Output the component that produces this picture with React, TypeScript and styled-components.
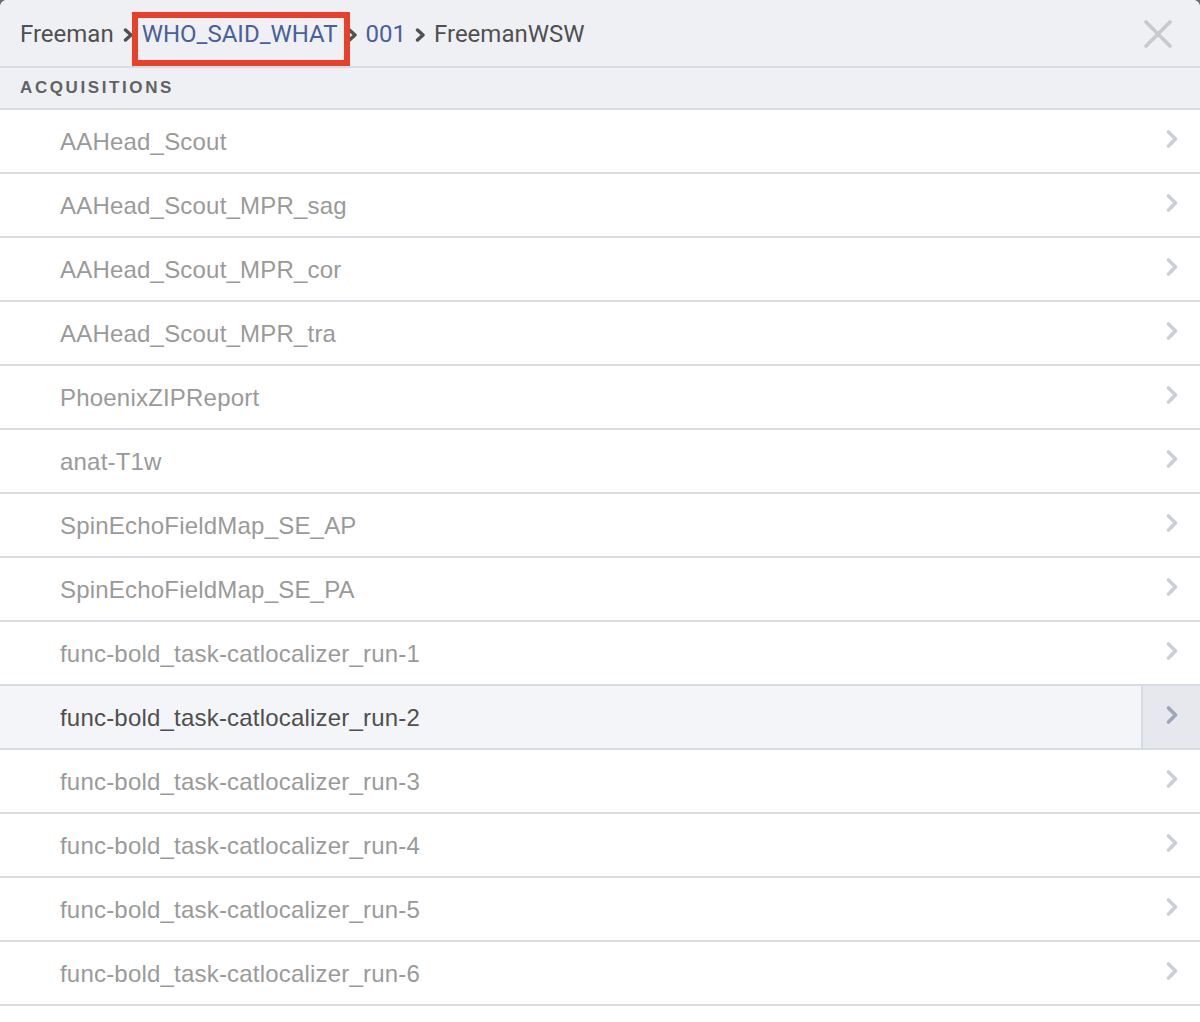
import React from "react";
import styled, { createGlobalStyle } from "styled-components";

const GlobalStyle = createGlobalStyle`
  html, body {
    margin: 0;
    padding: 0;
    background: #6b6b6b;
  }
  * { box-sizing: border-box; }
`;

const Modal = styled.div`
  width: 1200px;
  min-height: 1022px;
  background: #ffffff;
  border-radius: 7px 7px 0 0;
  overflow: hidden;
  display: flex;
  flex-direction: column;
`;

const Header = styled.div`
  height: 68px;
  display: flex;
  align-items: center;
  justify-content: space-between;
  padding: 2px 28px 0 20px;
  background: #eff0f4;
  border-bottom: 2px solid #d6dbe4;
`;

const Crumbs = styled.nav`
  display: flex;
  align-items: center;
  font-family: Roboto, "Liberation Sans", sans-serif;
  font-size: 24px;
  line-height: 28px;
  color: #505050;
`;

const Crumb = styled.span<{ $link?: boolean }>`
  color: ${(p) => (p.$link ? "#4b5f99" : "#505050")};
  white-space: nowrap;
`;

const Highlight = styled.span`
  position: relative;
  display: inline-block;
  &::after {
    content: "";
    position: absolute;
    left: -10px;
    right: -12px;
    top: -8px;
    bottom: -18px;
    border: 6px solid #e8402a;
    pointer-events: none;
  }
`;

const Sep = styled.svg`
  width: 11px;
  height: 14px;
  margin: 2px 8px 0 9px;
  flex: none;
`;

const CloseButton = styled.button`
  border: none;
  background: transparent;
  padding: 0;
  width: 28px;
  height: 28px;
  display: flex;
  cursor: pointer;
`;

const SectionTitle = styled.div`
  height: 42px;
  display: flex;
  align-items: center;
  padding: 0 20px 1px;
  background: #eff0f4;
  border-bottom: 2px solid #d6dbe4;
  font-family: "Liberation Sans", Arial, sans-serif;
  font-weight: 700;
  font-size: 17px;
  letter-spacing: 2.6px;
  color: #626262;
`;

const List = styled.div`
  display: flex;
  flex-direction: column;
`;

const Row = styled.div<{ $selected?: boolean }>`
  height: 64px;
  display: flex;
  align-items: stretch;
  border-bottom: 2px solid #d6dbe4;
  background: ${(p) => (p.$selected ? "#f4f5f9" : "#ffffff")};
`;

const Label = styled.div<{ $selected?: boolean }>`
  flex: 1;
  display: flex;
  align-items: center;
  padding: 1px 0 0 60px;
  font-family: "Liberation Sans", Arial, sans-serif;
  font-size: 24px;
  letter-spacing: 0.2px;
  color: ${(p) => (p.$selected ? "#4f4f4f" : "#9a9a9a")};
`;

const ChevronCell = styled.div<{ $selected?: boolean }>`
  width: 59px;
  display: flex;
  align-items: center;
  justify-content: center;
  padding-bottom: 4px;
  border-left: 2px solid ${(p) => (p.$selected ? "#d6dbe4" : "transparent")};
  background: ${(p) => (p.$selected ? "#e7e8ed" : "transparent")};
`;

const Chevron = styled.svg`
  width: 14px;
  height: 20px;
`;

const items = [
  "AAHead_Scout",
  "AAHead_Scout_MPR_sag",
  "AAHead_Scout_MPR_cor",
  "AAHead_Scout_MPR_tra",
  "PhoenixZIPReport",
  "anat-T1w",
  "SpinEchoFieldMap_SE_AP",
  "SpinEchoFieldMap_SE_PA",
  "func-bold_task-catlocalizer_run-1",
  "func-bold_task-catlocalizer_run-2",
  "func-bold_task-catlocalizer_run-3",
  "func-bold_task-catlocalizer_run-4",
  "func-bold_task-catlocalizer_run-5",
  "func-bold_task-catlocalizer_run-6",
];

const SELECTED = 9;

const Separator = () => (
  <Sep viewBox="0 0 11 14">
    <polyline
      points="2.5,2 8,7 2.5,12"
      fill="none"
      stroke="#505050"
      strokeWidth="3.4"
      strokeLinecap="round"
      strokeLinejoin="round"
    />
  </Sep>
);

export default function App() {
  return (
    <>
      <GlobalStyle />
      <Modal>
        <Header>
          <Crumbs>
            <Crumb>Freeman</Crumb>
            <Separator />
            <Highlight>
              <Crumb $link>WHO_SAID_WHAT</Crumb>
            </Highlight>
            <Separator />
            <Crumb $link>001</Crumb>
            <Separator />
            <Crumb>FreemanWSW</Crumb>
          </Crumbs>
          <CloseButton aria-label="Close">
            <svg width="28" height="28" viewBox="0 0 28 28">
              <path
                d="M2 2 L26 26 M26 2 L2 26"
                stroke="#c9c9c9"
                strokeWidth="3.6"
                strokeLinecap="round"
              />
            </svg>
          </CloseButton>
        </Header>
        <SectionTitle>ACQUISITIONS</SectionTitle>
        <List>
          {items.map((name, i) => {
            const sel = i === SELECTED;
            return (
              <Row key={name} $selected={sel}>
                <Label $selected={sel}>{name}</Label>
                <ChevronCell $selected={sel}>
                  <Chevron viewBox="0 0 14 20">
                    <polyline
                      points="3.5,3 10.5,10 3.5,17"
                      fill="none"
                      stroke={sel ? "#9ba5bc" : "#c9ceda"}
                      strokeWidth="3.6"
                      strokeLinecap="round"
                      strokeLinejoin="round"
                    />
                  </Chevron>
                </ChevronCell>
              </Row>
            );
          })}
        </List>
      </Modal>
    </>
  );
}
